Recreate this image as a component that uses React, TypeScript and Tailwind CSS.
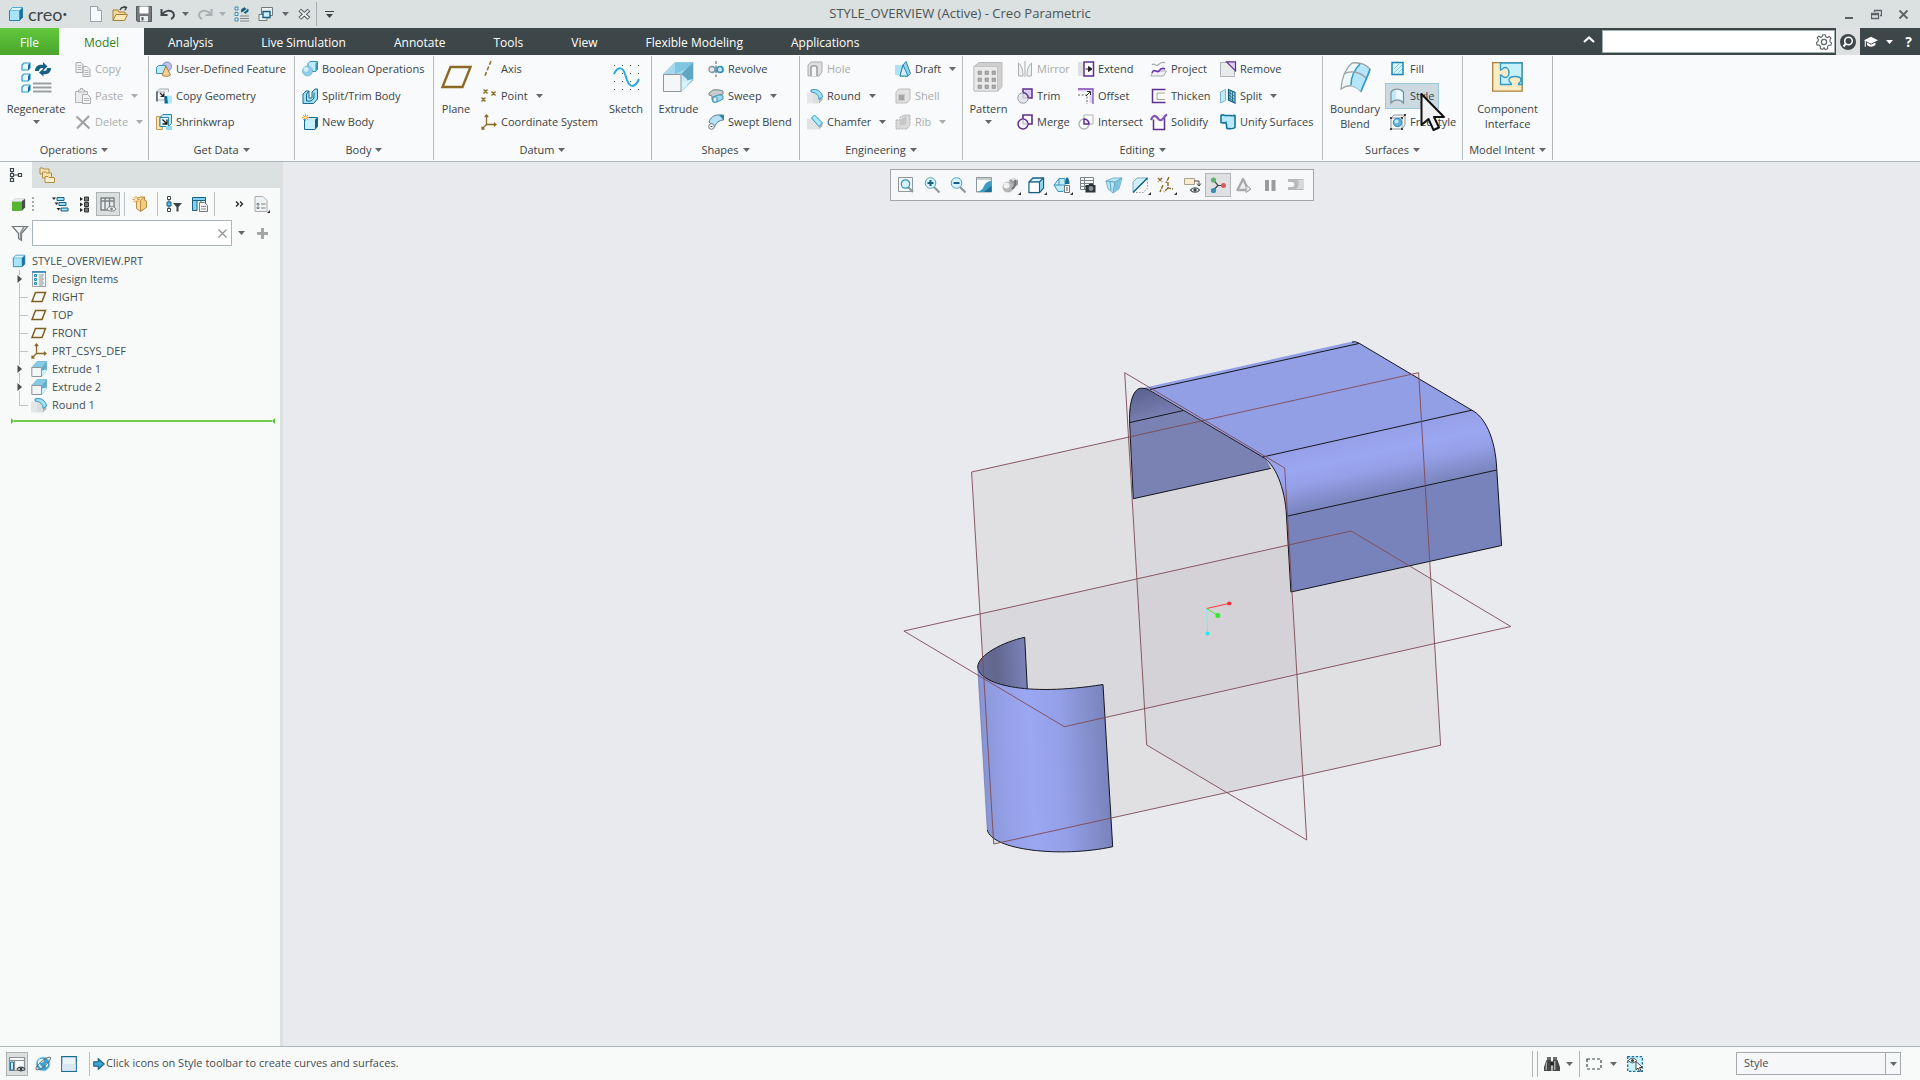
import React from 'react';

// 16x16 icons, shared by the ribbon, the tree and the toolbars
const icons: Record<string, React.ReactNode> = {
  cube: (
    <>
      <path d="M1.5 4.5l3-3h10v10l-3 3h-10z" fill="#a8e4fb" stroke="#2483ab" />
      <path d="M11.5 4.5l3-3v10l-3 3z" fill="#1d6f95" stroke="#2483ab" strokeWidth=".6" />
      <path d="M1.5 4.5l3-3h10l-3 3z" fill="#d8f4ff" stroke="#3f9dc2" strokeWidth=".6" />
    </>
  ),
  greenCube: (
    <>
      <path d="M0 5h11v11H0z" fill="#56b531" />
      <path d="M0 5l4-3h11l-4 3z" fill="#f2f2f2" stroke="#b5b5b5" strokeWidth=".6" />
      <path d="M11 5l4-3v10l-4 4z" fill="#4c4c4c" />
    </>
  ),
  newFile: (
    <>
      <path d="M2.5 .5h7l4 4v11h-11z" fill="#f7fafc" stroke="#93a2ab" />
      <path d="M9.5 .5v4h4" fill="#cfd9de" stroke="#93a2ab" />
    </>
  ),
  open: (
    <>
      <path d="M1 14.5V4h5l1 2h6v3" fill="#f3d793" stroke="#a6813c" />
      <path d="M1 14.5l3-6h11.5l-3 6z" fill="#ffe9b5" stroke="#a6813c" />
      <path d="M8 4c1-2.500 3-3 5-2.500M11.5 .3l3 1-1.500 3" fill="none" stroke="#3b4548" strokeWidth="1.400" />
    </>
  ),
  save: (
    <>
      <path d="M.5 .5h15v15h-14l-1-1z" fill="#737b7f" stroke="#555d61" />
      <path d="M3.5 .5h9v7h-9z" fill="#fff" />
      <path d="M4 10h8v5.500H4z" fill="#eceff0" />
      <path d="M5.5 11h2v3.500h-2z" fill="#555d61" />
    </>
  ),
  undo: <path d="M1.5 3v6h6M2 8.500c3-4 8-5 11-2 1.500 2 1.500 5-2 6.500" fill="none" stroke="#3d4649" strokeWidth="2" />,
  redo: <path d="M14.5 3v6h-6M14 8.500c-3-4-8-5-11-2-1.500 2-1.500 5 2 6.500" fill="none" stroke="#a9b0b1" strokeWidth="2" />,
  regen: (
    <>
      <path d="M1 1h3v3H1zM1 6.500h3v3H1zM1 12h3v3H1z" fill="#d9f3fd" stroke="#2b86ac" strokeWidth=".9" />
      <path d="M6 10h9M6 12.500h9M6 15h9" stroke="#7e8587" />
      <path d="M7.5 6.500C6 4 8 2 10 2l-.5-1.500L12.500 3 10 5M14 2.500c1.500 2.500 0 4-2 4.500l.5 1.300L9.500 6.500 12 4.700" fill="#17607f" />
    </>
  ),
  windows: (
    <>
      <path d="M3.5 1.500h11v8h-11z" fill="#eef1f2" stroke="#6f7a7e" />
      <path d="M1 8.500h8v6H1z" fill="#eef1f2" stroke="#6f7a7e" />
      <path d="M5 5.500h7v6H5z" fill="#c9f0ff" stroke="#17607f" strokeWidth="1.400" />
    </>
  ),
  closeWin: (
    <>
      <path d="M2 3.500L12.500 13M12.500 3.500L2 13" stroke="#454d50" strokeWidth="4.400" />
      <path d="M2.500 4l9.500 8.500M12 4l-9.500 8.500" stroke="#e8ecec" strokeWidth="2.200" />
    </>
  ),
  copy: (
    <>
      <path d="M1 1.500h5l2 2v8H1zM8 5.500h4l3 3v7H8z" fill="#f0f1f2" stroke="#a9adaf" />
      <path d="M2.500 4.500h4M2.500 6.500h4M2.500 8.500h4M9.500 9.500h4M9.500 11.500h4M9.500 13.500h4" stroke="#b5b8ba" />
    </>
  ),
  paste: (
    <>
      <path d="M.5 3.500h12v11H.5z" fill="#ececed" stroke="#b0b3b5" />
      <path d="M3.500 4V2h2V.5h2V2h2v2z" fill="#f7f7f7" stroke="#a9adaf" />
      <path d="M7.500 6.500h5l3 3v6h-8z" fill="#f5f5f6" stroke="#a9adaf" />
      <path d="M9 10.500h5M9 12.500h5" stroke="#b5b8ba" />
    </>
  ),
  del: <path d="M1.500 2.500l13 12M14 2L2 14.500" stroke="#a3a3a3" strokeWidth="2.200" />,
  udf: (
    <>
      <circle cx="11" cy="5.500" r="4.500" fill="#bcc3ea" stroke="#7f89c2" />
      <path d="M.5 6.500l2-2h7v6l-2 2h-7z" fill="#bdeafc" stroke="#3a93ba" />
      <path d="M10 5l4.500 9c-2 1.800-6.500 1.800-8.500 0z" fill="#f0cf95" stroke="#a57c3c" />
    </>
  ),
  copyGeom: (
    <>
      <path d="M.5 4l3-3h9v3" fill="#eceeef" stroke="#a9adaf" />
      <path d="M.5 4h8v8h-8z" fill="#fafafa" stroke="#a9adaf" />
      <path d="M1 3.500v10" stroke="#4a6274" strokeWidth="1.600" />
      <path d="M4 5l3 3M7.500 5.500V8.500H4.500" stroke="#222" fill="none" strokeWidth="1.200" />
      <path d="M8.500 8h4v7.500h-4z" fill="#0e6d92" />
      <path d="M11 7.500h5v8h-4z" fill="#a8eaff" />
    </>
  ),
  shrink: (
    <>
      <path d="M.5 2.500h6v13h-6z" fill="#fbe6bd" stroke="#c79c50" />
      <path d="M4 3.500l3-3h8.500v9l-3 3H4z" fill="#bfeafa" stroke="#2c86ab" />
      <path d="M4 3.500h8.500v9H4z" fill="#e9f8fd" stroke="#2c86ab" />
      <path d="M6.500 5.500l4 4M11 5.500V10H6.500" fill="none" stroke="#1c1c1c" strokeWidth="1.300" />
      <path d="M10 12h6v4h-6z" fill="#8fdcf8" />
    </>
  ),
  boolean: (
    <>
      <path d="M6 2.500l2-2h7.500v8l-2 2H6z" fill="#bfeafb" stroke="#338cb0" />
      <path d="M13.500 2.500l2-2v8l-2 2z" fill="#3b93b8" />
      <circle cx="5.500" cy="10" r="5" fill="#8fcde8" stroke="#5fa5c6" strokeWidth=".6" />
      <circle cx="4" cy="8.500" r="2.400" fill="#d2effa" />
    </>
  ),
  splitBody: (
    <>
      <path d="M1 6l3-3h3v7h3V4l3-3h2.500v10l-4 4.500H1z" fill="#a6def4" stroke="#176c92" />
      <path d="M7 3L4.500 6v7H9l3-3V4.500" fill="none" stroke="#176c92" />
    </>
  ),
  newBody: (
    <>
      <path d="M2.500 5.500l2-2h11v9l-2.500 3H2.500z" fill="#c8eefc" stroke="#176c92" />
      <path d="M13 5.500l2.500-2v9l-2.500 3z" fill="#17607f" />
      <path d="M3.500 0v7M0 3.500h7M1 1l5 5M6 1L1 6" stroke="#f0962a" />
      <circle cx="3.500" cy="3.500" r="1.300" fill="#fff4c0" />
    </>
  ),
  axis: <path d="M10 0L3.500 16" stroke="#8b6a24" strokeWidth="1.500" strokeDasharray="4 2" />,
  point: (
    <path d="M2.500 1.500l4 4M6.500 1.500l-4 4M10.500 3.500l4 4M14.500 3.500l-4 4M.5 9.500l4 4M4.500 9.500l-4 4" stroke="#8b6a24" strokeWidth="1.400" />
  ),
  csys: <path d="M5.500 1v9.500h9.500M5.500 10.500L1 15M3.800 3l1.700-2 1.700 2M13 8.700l2 1.800-2 1.800M1 12.500V15h2.500" fill="none" stroke="#8b6a24" strokeWidth="1.300" />,
  plane: <path d="M4.500 3.500h10l-3.500 9H1z" fill="none" stroke="#7d601f" strokeWidth="1.500" />,
  revolve: (
    <>
      <circle cx="4" cy="8.500" r="3" fill="#e4e6e8" stroke="#8d9295" strokeWidth="1.300" />
      <circle cx="12" cy="8.500" r="3" fill="#bfe9fb" stroke="#2585b5" strokeWidth="1.600" />
      <path d="M4 5.500c2 0 6 6 8 6M4 11.500c2 0 6-6 8-6" fill="none" stroke="#58a9cf" />
      <path d="M8 0v16" stroke="#555" strokeDasharray="3 1.500" />
    </>
  ),
  sweep: (
    <>
      <path d="M1 5l4-3c4-.5 8 0 10 1v3c-3 1-5 1-6 3v4l-5-1V8L1 7z" fill="#c9ccce" stroke="#7c8386" />
      <path d="M5 9l5-2c2 0 4 0 5 1v3l-6 3H5z" fill="#9edaf3" stroke="#3a93ba" />
      <path d="M5 9h4v5H5z" fill="#e2f6fd" stroke="#3a93ba" />
    </>
  ),
  sweptBlend: (
    <>
      <path d="M1 8C2 4 6 1 10 1h5.500v5C11 6 8 9 6.500 13z" fill="#b5e2f4" stroke="#56788a" />
      <path d="M11 1l4.500 5v-5z" fill="#2c86ab" />
      <circle cx="3.500" cy="12.500" r="2.800" fill="#fff" stroke="#6e7679" />
      <path d="M2.500 12.500h2" stroke="#444" />
    </>
  ),
  hole: (
    <>
      <path d="M1 4l3-3h11v10l-3 4H1z" fill="#dedede" stroke="#adadad" />
      <path d="M4 15V7c0-3 6-3 6 0v8" fill="#f6f6f6" stroke="#a0a0a0" strokeWidth="1.600" />
    </>
  ),
  round: (
    <>
      <path d="M0 4.500h6v11H0z" fill="#e4e6e7" />
      <path d="M6 4.500c4 1 6 4 6 7v4H6z" fill="#dcdfe0" />
      <path d="M12 11.500l3.500-2.500v3L12 15.500z" fill="#b3b8ba" />
      <path d="M4 2C10 0 15 4 15.500 9L12 11.500C12 7 9 4.500 4 4z" fill="#a3e0f8" stroke="#2f97c4" />
    </>
  ),
  chamfer: (
    <>
      <path d="M0 4.500h5l7 7v4H0z" fill="#e0e3e4" />
      <path d="M12 11.500l3.500-3.500v4L12 15.500z" fill="#b3b8ba" />
      <path d="M4.500 4l3-3 8 8-3.500 3.500z" fill="#a9e9fb" stroke="#2f97c4" />
    </>
  ),
  draft: (
    <>
      <path d="M0 4h8v10H0z" fill="#abe2f5" />
      <path d="M8 4l3-3.500 4.500 12L13 15H5z" fill="#8ed3ee" stroke="#2f86aa" />
      <path d="M8 4l5 11H5z" fill="#d4f1fb" stroke="#2f86aa" />
    </>
  ),
  shell: (
    <>
      <path d="M1 4l3-3h11v10l-3 4H1z" fill="#e2e2e2" stroke="#bdbdbd" />
      <path d="M3.500 6.500h6v6h-6z" fill="#a6a6a6" stroke="#c9c9c9" />
    </>
  ),
  rib: (
    <>
      <path d="M1 6h4V3l4-2h6v10l-3 4H1z" fill="#dadada" stroke="#b0b0b0" strokeDasharray="2 1" />
      <path d="M5 12V6l6-4v8z" fill="#c6c6c6" />
    </>
  ),
  mirror: <path d="M1.500 2v13h4.500C6 8 4 4 1.500 2zM14.500 2v13H10C10 8 12 4 14.500 2zM8 0v16" fill="#eef0f1" stroke="#a9adaf" />,
  trim: (
    <>
      <path d="M6 1h9v9H6z" fill="#d9ccf5" stroke="#5b2f8f" strokeWidth="1.500" />
      <circle cx="6" cy="10" r="5.200" fill="#e2e3e6" fillOpacity=".85" stroke="#9b9fa3" />
      <path d="M6 4.800A5.200 5.200 0 0 1 11.200 10" fill="none" stroke="#5b2f8f" strokeWidth="1.500" />
    </>
  ),
  merge: (
    <>
      <path d="M6 5V1h9v9h-4" fill="none" stroke="#5b2f8f" strokeWidth="1.600" />
      <circle cx="6" cy="10" r="5" fill="#f3f3f6" stroke="#5b2f8f" strokeWidth="1.500" />
      <path d="M6 5v5h5" fill="none" stroke="#b2b5b8" />
    </>
  ),
  intersect: (
    <>
      <path d="M6 1h9v9H6z" fill="none" stroke="#b2b5b8" />
      <circle cx="6" cy="10" r="5" fill="none" stroke="#b2b5b8" strokeWidth="1.400" />
      <path d="M6 10V5a5 5 0 0 1 5 5z" fill="#eeeaf5" stroke="#5b2f8f" strokeWidth="1.400" />
    </>
  ),
  extend: (
    <>
      <path d="M0 1h6v14H0z" fill="#e0e1e3" />
      <path d="M6 1h9.500v14H6z" fill="#fff" stroke="#5b2f8f" strokeWidth="1.500" />
      <path d="M7.500 8h3V5.500L14 8l-3.500 2.500V8" fill="#222" stroke="#222" />
    </>
  ),
  offset: (
    <>
      <path d="M0 0h15v15h-3.500V3.500H0z" fill="#ded3f0" />
      <path d="M0 1h15v15" fill="none" stroke="#8253b5" strokeWidth="1.300" />
      <path d="M0 7h9v9" fill="none" stroke="#666" strokeDasharray="2 1.500" />
      <path d="M8 8l4-4M9 3.500h3.500V7" fill="none" stroke="#333" />
    </>
  ),
  project: (
    <>
      <path d="M1 4c2-3 4 2 6 0s4-4 7-2" fill="none" stroke="#a7abad" strokeWidth="1.300" />
      <path d="M2 10h13.500l-3 5H0z" fill="#f1f1f3" stroke="#a7abad" />
      <path d="M1 12c2-6 5 1 7-2s4-3 6-2" fill="none" stroke="#7233b0" strokeWidth="1.600" />
    </>
  ),
  thicken: (
    <>
      <path d="M14 1.500H2v13h12z" fill="#fdfdfe" />
      <path d="M14.500 1.500H1.500v13h13" fill="none" stroke="#5b2f8f" strokeWidth="1.500" />
      <path d="M14 5H6v6.500h8" fill="none" stroke="#9da1a4" />
    </>
  ),
  solidify: (
    <>
      <path d="M2.500 5.500v10h11v-13" fill="#fbfafd" stroke="#5b2f8f" strokeWidth="1.500" />
      <path d="M0 6C2 1 4 1 6.500 4s4 3 6 0 2.500-3 3.500-3.500" fill="none" stroke="#8352b8" strokeWidth="2.200" />
    </>
  ),
  remove: (
    <>
      <path d="M.5 1.500h14v14H.5z" fill="#e9eaec" stroke="#b1b4b6" />
      <path d="M6.500 .8h9v9z" fill="#dccdf5" stroke="#5b2f8f" strokeWidth="1.200" />
    </>
  ),
  split: (
    <>
      <path d="M.5 4l5-2.500v11L.5 15z" fill="#bdecfb" stroke="#7fb6cc" />
      <path d="M8.500 1.500l6.500 3V15l-6.500-3z" fill="#9fdcf2" stroke="#17607f" strokeWidth="1.200" />
      <path d="M9 4l5 4M9 7l5 4M9 10l5 3.500M10 3v9M12.500 4v9" stroke="#17607f" strokeWidth=".8" />
    </>
  ),
  unify: (
    <path d="M1 1.500c3-2 4 1 5 0h5c2 1 3-1 4 0v12c-2 2-6 1-8 1l-1-6c-2 1-4 0-5 0z" fill="#b6eafa" stroke="#17719a" strokeWidth="1.600" />
  ),
  fill: (
    <>
      <path d="M2 1.500h11v12H2z" fill="#d5f4fd" stroke="#1c84b4" strokeWidth="1.500" />
      <path d="M4 8l5-5M4 12l8-8M8 12l4-4" stroke="#87cde6" />
    </>
  ),
  style: (
    <>
      <path d="M1 4c3-4 9-4 12.500 0v11C10 11 4 11 1 15z" fill="#bfeafa" stroke="#7d8e98" strokeWidth="1.200" />
      <path d="M6 2c3 0 5 1 6.500 3v7c-2-1-4-1.500-6.500-1.500z" fill="#ecfaff" />
    </>
  ),
  freestyle: (
    <>
      <path d="M1 4l3-3h11v10l-3 4H1zM1 4h11v11M12 4l3-3" fill="none" stroke="#8f9598" />
      <circle cx="7.500" cy="8.500" r="4.200" fill="#5db4dc" stroke="#2d88b2" />
      <circle cx="6.500" cy="7.500" r="2" fill="#c6ebf9" />
      <path d="M0 3h2v2H0zM11 3h2v2h-2zM0 14h2v2H0zM11 14h2v2h-2zM14 0h2v2h-2z" fill="#444" />
    </>
  ),
  tree: (
    <path d="M2.500 1.500h3v3h-3zM2.500 6.500h3v3h-3zM2.500 11.500h3v3h-3zM10.500 6.500h3v3h-3zM4 4.500v2M4 9.500v2M5.500 8h5" fill="none" stroke="#3b4548" strokeWidth="1.200" />
  ),
  folders: (
    <>
      <path d="M1 1h3l1 1h5v5H1z" fill="#fae2af" stroke="#b48b46" />
      <path d="M3.500 5h3l1 1h5v5h-9z" fill="#fae2af" stroke="#b48b46" />
      <path d="M6 9.500h3l1 1h5.500v5H6z" fill="#fff0cd" stroke="#b48b46" />
    </>
  ),
  treeA: (
    <>
      <path d="M5 1.500h7v3H5zM7 6.500h7v3H7zM9 12h7v3H9z" fill="#9be0f8" stroke="#17607f" />
      <path d="M0 1.500h4L2 4zM2.500 6.500h4l-2 2.500zM4.500 12h4l-2 2.500z" fill="#222" />
    </>
  ),
  treeB: (
    <>
      <path d="M6.500 1h4v4h-4zM6.500 6.500h4v4h-4zM6.500 12h4v4h-4z" fill="#777" stroke="#333" />
      <path d="M2 1v4l3-2zM2 6.500v4l3-2zM2 12v4l3-2z" fill="#222" />
    </>
  ),
  columns: (
    <>
      <path d="M1 2h13v12H1zM1 5h13M5 2v12M9.500 2v12" fill="#e9ebec" stroke="#7d8487" strokeWidth="1.400" />
      <path d="M7 13c2-3.500 7-3.500 9 0-2 3-7 3-9 0z" fill="#f1f1f1" stroke="#7d8487" />
      <circle cx="11.500" cy="13" r="1.400" fill="#7d8487" />
    </>
  ),
  newPart: (
    <>
      <path d="M3.500 2.500L7.500 1h4v11l-4 3.500-4-3z" fill="#f9dca0" stroke="#b98e42" />
      <path d="M7.500 4.500L11.500 1v3l2 1v6.500l-6 4z" fill="#f1cb84" stroke="#b98e42" />
      <path d="M3 0v7M-.5 3.500h7M.5 1l5 5M5.500 1l-5 5" stroke="#ef8f22" />
      <circle cx="3" cy="3.500" r="1.200" fill="#fff" />
    </>
  ),
  treeFilter: (
    <>
      <path d="M1.500 .5h3v3h-3zM1.500 12.500h3v3h-3zM3 3.500v9" fill="none" stroke="#3b4548" />
      <path d="M1 6h4v4H1z" fill="#58bfe6" stroke="#17607f" />
      <path d="M7 7h9l-3.500 4v4.500h-2V11z" fill="#3b4548" />
    </>
  ),
  tableFile: (
    <>
      <path d="M.5 1.500h13v3H.5zM.5 4.500h4.500v10H.5z" fill="#7fd3f2" stroke="#17607f" />
      <path d="M9 4.500v3M13.500 4.500v3" stroke="#17607f" />
      <path d="M7.500 6.500h5l3 3v6h-8z" fill="#f7f7f7" stroke="#737b7f" />
      <path d="M9 10.500h5M9 13h5" stroke="#888" />
    </>
  ),
  listFile: (
    <>
      <path d="M1 .5h8l4 4v11H1z" fill="#eef3f5" stroke="#a5adb1" />
      <path d="M3 7.500h2v1.500H3zM3 11h2v1.500H3zM7 8h4.500M7 12h4.500" fill="none" stroke="#7d8487" />
      <path d="M16 14v3h-3z" fill="#333" />
    </>
  ),
  funnel: (
    <>
      <path d="M.5 1.500h15l-6 7v7l-3-2v-5z" fill="#f2f3f3" stroke="#6f777a" strokeWidth="1.200" />
      <path d="M12 2L8.500 8v6" fill="none" stroke="#8b9295" strokeWidth="1.500" />
    </>
  ),
  designItems: (
    <>
      <path d="M1.500 .5h13v15h-13z" fill="#f3f7f9" stroke="#9aa4a9" />
      <path d="M1 1h14" stroke="#2b86ac" strokeWidth="1.600" />
      <path d="M3.500 3.500h2v2h-2zM3.500 7.500h2v2h-2zM3.500 11.500h2v2h-2z" fill="#bfe9fb" stroke="#1c84b4" />
      <path d="M8 4h5M8 6h4M8 8h5M8 10h4M8 12h5M8 14h4" stroke="#8b9295" />
    </>
  ),
  extrude: (
    <>
      <path d="M1 6.500l5-6h9.500v9l-5 6z" fill="#b8e6f8" stroke="#5fa9c9" strokeWidth=".8" />
      <path d="M6 .5h9.500l-5 6H1z" fill="#86cbe6" />
      <path d="M10.500 6.500l5-6v9l-5 6z" fill="#65aecb" />
      <path d="M11 15V9.500l4.500-1V10z" fill="#d6f2fc" />
      <path d="M.8 6.500h9.700v9H.8z" fill="#f4f5f6" stroke="#8f979a" />
    </>
  ),
  zoomFit: (
    <>
      <path d="M.5 .5h14v14H.5z" fill="#f2f6f8" stroke="#8f989c" />
      <path d="M10 10l5 5" stroke="#8f989c" strokeWidth="2.200" />
      <circle cx="7.500" cy="7" r="4.200" fill="#d6f4fd" stroke="#3a93ba" strokeWidth="1.200" />
    </>
  ),
  zoomIn: (
    <>
      <path d="M10 10l5.500 5.500" stroke="#8f989c" strokeWidth="2.200" />
      <circle cx="6.500" cy="6" r="5.300" fill="#d6f4fd" stroke="#5a9fbc" />
      <path d="M6.500 3v6M3.500 6h6" stroke="#17607f" strokeWidth="2" />
    </>
  ),
  zoomOut: (
    <>
      <path d="M10 10l5.500 5.500" stroke="#8f989c" strokeWidth="2.200" />
      <circle cx="6.500" cy="6" r="5.300" fill="#d6f4fd" stroke="#5a9fbc" />
      <path d="M3.500 6h6" stroke="#17607f" strokeWidth="2" />
    </>
  ),
  repaint: (
    <>
      <path d="M.5 .5h15v14.500H.5z" fill="#f6fafb" stroke="#8f989c" />
      <path d="M15.500 4v11H1c4-1 6-3 7-6 1-3 4-5 7.500-5z" fill="#3d9ac0" />
      <path d="M15.500 9v6H8z" fill="#1c6d92" />
      <path d="M1 2h14" stroke="#b4bbbe" strokeWidth="1.500" />
    </>
  ),
  shading: (
    <>
      <path d="M7 3l6-2 3 2v5l-6 3z" fill="#9a9d9f" />
      <path d="M9 2l5-1 2 2-5 1z" fill="#dfe0e1" />
      <circle cx="6" cy="10" r="5.500" fill="#b4b6b8" />
      <circle cx="4.500" cy="8.500" r="3" fill="#f2f2f3" />
      <path d="M10 12c3-2 4-6 3-9" stroke="#6d7173" strokeWidth="2" fill="none" />
    </>
  ),
  box: (
    <>
      <path d="M1 5l4-4h10.500v10l-4 4.500H1z" fill="#d3f2fc" stroke="#17607f" strokeWidth="1.300" />
      <path d="M1 5h10.500v10.500M11.500 5l4-4" fill="none" stroke="#17607f" strokeWidth="1.300" />
      <path d="M1.800 5.800h9v9h-9z" fill="#fff" />
      <path d="M12 5.500l3-3v8l-3 3.500z" fill="#8fd4ee" />
    </>
  ),
  orient: (
    <>
      <path d="M0 8l5-6.500h6v11l-2 2H4z" fill="#bfeafa" stroke="#3a93ba" />
      <path d="M0 8h10M5 1.500V8" stroke="#3a93ba" />
      <path d="M11 7c0-4 1-6 2-7 1.500 1 2.500 3 2.500 7z" fill="#1c6d92" />
      <path d="M10.500 8.500h5v7h-5z" fill="#fff" stroke="#6f777a" />
      <path d="M12 11h2M12 13h2" stroke="#555" />
    </>
  ),
  camera: (
    <>
      <path d="M.5 .5h13v12H.5zM.5 3.500h13M.5 6.500h13M.5 9.500h13M4.500 .5v12" fill="#f5f6f6" stroke="#7d8487" />
      <path d="M5.500 8h3l1-1.500h3l1 1.500h2v7.500h-10z" fill="#2e3436" />
      <circle cx="11" cy="11.500" r="2.400" fill="#8b9295" />
    </>
  ),
  perspective: (
    <>
      <path d="M0 4l7-3h9l-3 11-6 4-5-4z" fill="#bce6f6" stroke="#77b6d0" />
      <path d="M0 4l9 1 7-4M9 5l-2 11M4 4.500l1 9" fill="none" stroke="#56a0c0" />
      <path d="M9 6l6-4-2.500 9.500L8 15z" fill="#7cc0db" />
    </>
  ),
  section: (
    <>
      <path d="M1 5l4-4h10.500L1 15z" fill="#cdeffb" stroke="#7fb1c5" />
      <path d="M1 15.500L15.500 1" stroke="#17607f" strokeWidth="1.400" />
      <path d="M15.500 2v9l-4 4.500H2" fill="none" stroke="#8f989c" strokeDasharray="1.500 1.500" />
    </>
  ),
  datumShow: (
    <path d="M0 1l4 4M4 1L0 5M11 0L8 6M5 8l-3 7M10 5v6l5 1M10 11l-4 4" fill="none" stroke="#8b6a24" strokeWidth="1.400" strokeDasharray="4 1" />
  ),
  annotShow: (
    <>
      <path d="M.5 1.500h10v6H.5z" fill="#fdeccb" stroke="#a6a08f" />
      <path d="M10.500 4H15v4M13 6.500l2 2.500 2-2.500" fill="none" stroke="#444" />
      <path d="M6.500 13c2-3 7-3 9 0-2 3-7 3-9 0z" fill="#fff" stroke="#3b4548" strokeWidth="1.200" />
      <circle cx="11" cy="13" r="1.700" fill="#3b4548" />
    </>
  ),
  spin: (
    <>
      <path d="M3.500 3L8 8.500h5M8 8.500L3.500 13" fill="none" stroke="#444" strokeWidth="1.200" />
      <circle cx="3.500" cy="3" r="2.600" fill="#5cb56a" />
      <circle cx="13.500" cy="8.500" r="2.500" fill="#d95b5b" />
      <circle cx="3.500" cy="13.500" r="2.600" fill="#3a8db5" />
    </>
  ),
  simTri: (
    <>
      <path d="M7 2L1.500 13h11z" fill="#f0f0f0" stroke="#a9a9a9" strokeWidth="2.400" strokeLinejoin="round" />
      <path d="M10 8l5 4-5 3.500z" fill="#e5e5e5" stroke="#9c9c9c" />
    </>
  ),
  pause: <path d="M3 3h4v11H3zM9.500 3h4v11h-4z" fill="#9b9b9b" />,
  simEnd: (
    <>
      <path d="M0 2h15.500v11H0v-3h4c3 0 3-5 0-5H0z" fill="#b9b9b9" />
      <path d="M10 3h5v9h-7c3-2 3-6 2-9z" fill="#d9d9d9" />
    </>
  ),
  panelEye: (
    <>
      <path d="M.5 1.500h15v13H.5zM.5 4.500h15M5.500 4.500v10" fill="#f7f8f8" stroke="#8b9295" strokeWidth="1.200" />
      <path d="M1.500 6h3v8h-3z" fill="#c9effb" stroke="#17719a" />
      <path d="M8 13c2-2.500 6-2.500 8 0-2 2.500-6 2.500-8 0z" fill="#fff" stroke="#3b4548" strokeWidth="1.200" />
      <circle cx="12" cy="13" r="1.500" fill="#3b4548" />
    </>
  ),
  globe: (
    <>
      <circle cx="8" cy="8" r="6.800" fill="#3f9fce" stroke="#8cc6e0" />
      <path d="M4 3.500c2-1.500 6-1 5 1.500s-4 1-4 3 3 2 2 4.500c-3-1-6-6-3-9zM11.500 7c2 0 2 3 .5 4s-2-3-.5-4z" fill="#e0f4fb" />
      <path d="M1 13.500c-2-3 12-14.500 14.500-12 1.500 3-11 14.500-14.500 12z" fill="none" stroke="#555e62" strokeWidth=".9" />
    </>
  ),
  blank: (
    <>
      <path d="M.7 .7h14.600v14.600H.7z" fill="#eaf3f8" stroke="#1c6d92" strokeWidth="1.200" />
      <path d="M1.300 8h13.400v6.700H1.300z" fill="#d9e8f0" />
    </>
  ),
  arrowRight: <path d="M1 5h6V1l8 7-8 7v-4H1z" fill="#3aa5d0" stroke="#175d7d" strokeWidth="1.400" />,
  binoculars: (
    <>
      <path d="M3 1h4v3H3zM9 1h4v3H9z" fill="#6c6c6c" />
      <path d="M2.500 4H7l.5 11H0V11zM9 4h4.500l2.500 7v4H8.500z" fill="#474747" />
      <path d="M2 7l1-2v9H1.500v-3zM10 5h1.500v9H10z" fill="#a5a5a5" />
      <path d="M6.500 5.500h3v4h-3z" fill="#222" />
    </>
  ),
  marquee: <path d="M1 3h14v10H1z" fill="none" stroke="#3b4548" strokeDasharray="3 2" strokeWidth="1.200" />,
  selectEye: (
    <>
      <path d="M.7 .7h14.600v14.600H.7z" fill="#c9f3fd" stroke="#17719a" strokeWidth="1.300" strokeDasharray="2.500 1.500" />
      <path d="M1.500 4.500c2-3 6-3 8 0-2 3-6 3-8 0z" fill="#fff" stroke="#3b4548" />
      <circle cx="5.500" cy="4.500" r="1.500" fill="#3b4548" />
      <path d="M9 5.500v8.500l2-2 1.500 3.500 1.500-.7-1.500-3.300h3z" fill="#fff" stroke="#444" />
    </>
  ),
  gear: (
    <>
      <path d="M6.800 .8h2.400l.5 2 1.800.8 2-1.100 1.500 1.700-1.200 1.800.4 2 1.300.9-.6 2.200-2.100.1-1.300 1.500.2 2-2.400.9L8 13.700l-1.300 1.700-2.400-.8.200-2.100-1.400-1.400-2.100-.2-.5-2.300L2 7.500l.4-1.800L1.200 3.900l1.500-1.700 2 1.100 1.600-.7z" fill="#fff" stroke="#5a6366" strokeWidth="1.100" />
      <circle cx="8" cy="8" r="2.600" fill="none" stroke="#5a6366" strokeWidth="1.200" />
    </>
  ),
  lens: (
    <>
      <circle cx="8" cy="8" r="8" fill="#3d4749" />
      <circle cx="8.500" cy="7" r="3.800" fill="none" stroke="#fff" strokeWidth="1.600" />
      <path d="M6 9.500L3.500 12.500" stroke="#fff" strokeWidth="2" />
    </>
  ),
  cap: (
    <>
      <path d="M8 2l8 4-8 4-8-4z" fill="#fff" />
      <path d="M3.500 8.500L8 11l5-2.500v3c-3 2.500-7 2.500-9.500 0z" fill="#fff" />
      <path d="M1.500 6.500v7" stroke="#fff" strokeWidth="1.200" />
    </>
  ),
};

// 31x31 icons above the big ribbon buttons
const bigIcons: Record<string, React.ReactNode> = {
  regen: (
    <>
      <path d="M1 3l2-2h6v5l-2 2H1zM1 14l2-2h6v5l-2 2H1zM1 25l2-2h6v5l-2 2H1z" fill="#e6f8fe" stroke="#2b9ccb" strokeWidth="1.200" />
      <path d="M7 3l2-2v5L7 8zM7 14l2-2v5l-2 2zM7 25l2-2v5l-2 2z" fill="#1c6d92" />
      <path d="M12 21.500h18.500M12 25.500h18.500M12 29.500h18.500" stroke="#9a9fa1" strokeWidth="1.800" />
      <path d="M18 9H14c0-4 3-7 8-6V0l4.500 4.500L22 8.500V6c-2.500-.5-4 1-4 3z" fill="#17607f" />
      <path d="M26 6h4c0 4-3 7-7.500 6v2.500L18 10.500l4.500-4V9c2 .5 3.500-1 3.500-3z" fill="#17607f" />
    </>
  ),
  plane: <path d="M9.500 5h20L21.500 25H1.500z" fill="none" stroke="#8b6a24" strokeWidth="2.400" />,
  sketch: (
    <>
      {[2, 10, 18, 26].flatMap((y) => [2, 10, 18, 26].map((x) => <path key={`${x}-${y}`} d={`M${x + 1} ${y + 1}h1v1h-1z`} fill="#555" />))}
      <path d="M3 12c4-8 9-7 11 0l2 6c3 8 8 8 12-1" fill="none" stroke="#2aa6e0" strokeWidth="2" />
    </>
  ),
  extrude: (
    <>
      <path d="M.5 12L12 .5h18v17.500L18 29.500z" fill="#c8edf9" stroke="#8dbed2" strokeWidth=".8" />
      <path d="M12 .5h18L18 12H.5z" fill="#a5d8ec" />
      <path d="M12 .5h18L24 6.500 12 12z" fill="#7fc6e2" />
      <path d="M18 12L30 .5V18l-6 5V17z" fill="#5fa6c4" />
      <path d="M18 29V20l12-3z" fill="#d6f4fd" />
      <path d="M.5 12.500H18v17H.5z" fill="#f5f6f7" stroke="#8f9699" />
    </>
  ),
  pattern: (
    <>
      <path d="M1 4.500L6 .5h23v24L25 29H1z" fill="#cfcfcf" stroke="#bbb" />
      <path d="M1 4.500h23.500V29H1z" fill="#e9e9e9" stroke="#c4c4c4" />
      {[9, 16, 23].flatMap((y) => [5, 12, 19].map((x) => <path key={`${x}-${y}`} d={`M${x} ${y}h3.500v3.500h-3.500z`} fill="#a9a9a9" stroke="#8c8c8c" strokeWidth=".6" />))}
    </>
  ),
  boundary: (
    <>
      <path d="M1 27C2 14 6 6 12 1c7-1 13 1 18 6-2 7-6 14-9 22.500C15 23 8 22 1 27z" fill="#eef7fa" stroke="#9ca4a8" strokeWidth="1.300" />
      <path d="M20 3c5 1 8 3 10 5-3 7-6 13-9 21.500-3-3-6-5-9.500-6C12 15 14 8 20 3z" fill="#b2e6f8" />
      <path d="M20 2C14 8 11 14 11 23" fill="none" stroke="#2b97c8" strokeWidth="1.500" />
      <path d="M4 12c7-4 16-2 22 4" fill="none" stroke="#9ca4a8" strokeWidth="1.400" />
      <path d="M30 7c-2 7-6 14-9 22.500" stroke="#2b97c8" strokeWidth="1.600" fill="none" />
    </>
  ),
  component: (
    <>
      <path d="M.7 .7h29.500v28.500H.7z" fill="#fdebc4" stroke="#a6813c" strokeWidth="1.300" />
      <path d="M8.500 1H30v21.500h-3.500c0-2 2.500-2 2.500-4.500s-3-3.500-6-3.500-6 1-6 3.500 2.500 2.500 2.500 4.500h-11V13c2 0 2 2.500 4.500 2.500s4-2.500 4-5-1.500-5-4-5S10.500 8 8.500 8z" fill="#c6f1fc" stroke="#2b9ccb" strokeWidth="1.400" />
    </>
  ),
};

const Icon = ({ name, className = 'size-4' }: { name: string; className?: string }) => (
  <svg viewBox="0 0 16 16" className={`${className} shrink-0 overflow-visible`} fill="none" aria-hidden="true">
    {icons[name]}
  </svg>
);

const Caret = ({ className = 'text-[#636869]' }: { className?: string }) => (
  <svg viewBox="0 0 7 4" className={`h-1 w-[7px] shrink-0 ${className}`} aria-hidden="true">
    <path d="M0 0h7L3.500 4z" fill="currentColor" />
  </svg>
);

type CmdProps = { icon: string; label: string; caret?: boolean; disabled?: boolean; active?: boolean; children?: React.ReactNode };

const Cmd = ({ icon, label, caret, disabled, active, children }: CmdProps) => (
  <button
    disabled={disabled}
    className={`relative flex h-[26px] items-center gap-1 border px-1 whitespace-nowrap first:mb-px ${
      active ? 'border-[#9cc7dc] bg-[#ccd9e1]' : 'border-transparent'
    } ${disabled ? 'text-[#a9acad]' : ''}`}
  >
    <Icon name={icon} />
    {label}
    {caret && (
      <span className="pl-1">
        <Caret className={disabled ? 'text-[#a9acad]' : 'text-[#636869]'} />
      </span>
    )}
    {children}
  </button>
);

const Big = ({ icon, label, caret, className }: { icon: string; label: string; caret?: boolean; className: string }) => (
  <button className={`flex shrink-0 flex-col items-center pt-1.5 leading-[15px] ${className}`}>
    <svg viewBox="0 0 31 31" className="size-[31px]" fill="none" aria-hidden="true">
      {bigIcons[icon]}
    </svg>
    <span className="mt-2">{label}</span>
    {caret && (
      <span className="mt-1">
        <Caret />
      </span>
    )}
  </button>
);

const Col = ({ className = '', children }: { className?: string; children: React.ReactNode }) => (
  <div className={`flex shrink-0 flex-col items-start ${className}`}>{children}</div>
);

const Group = ({ label, className, children }: { label: string; className: string; children: React.ReactNode }) => (
  <section className={`flex shrink-0 flex-col border-r border-[#b3b8ba] ${className}`}>
    <div className="flex h-[84px] px-0.5">{children}</div>
    <button className="flex h-5 items-center justify-center gap-1 whitespace-nowrap">
      {label} <Caret />
    </button>
  </section>
);

// mouse pointer resting over the Style command
const Pointer = () => (
  <svg viewBox="0 0 26 40" className="pointer-events-none absolute top-2 left-[34px] z-10 h-10 w-[26px]" aria-hidden="true">
    <path d="M1.500 2v31l7-6 5 11 5.500-2.500-5-10.500H24z" fill="#f1f1f3" stroke="#111" strokeWidth="2" strokeLinejoin="round" />
  </svg>
);

const Ribbon = () => (
  <div className="flex h-[107px] border-b border-[#a9b9ba] bg-[#f8fafb] py-px text-[11px]">
    <Group label="Operations" className="w-[149px]">
      <Big icon="regen" label="Regenerate" caret className="w-[68px]" />
      <Col>
        <Cmd icon="copy" label="Copy" disabled />
        <Cmd icon="paste" label="Paste" caret disabled />
        <Cmd icon="del" label="Delete" caret disabled />
      </Col>
    </Group>
    <Group label="Get Data" className="w-[146px]">
      <Col>
        <Cmd icon="udf" label="User-Defined Feature" />
        <Cmd icon="copyGeom" label="Copy Geometry" />
        <Cmd icon="shrink" label="Shrinkwrap" />
      </Col>
    </Group>
    <Group label="Body" className="w-[139px]">
      <Col>
        <Cmd icon="boolean" label="Boolean Operations" />
        <Cmd icon="splitBody" label="Split/Trim Body" />
        <Cmd icon="newBody" label="New Body" />
      </Col>
    </Group>
    <Group label="Datum" className="w-[218px]">
      <Big icon="plane" label="Plane" className="w-10" />
      <Col className="w-[129px]">
        <Cmd icon="axis" label="Axis" />
        <Cmd icon="point" label="Point" caret />
        <Cmd icon="csys" label="Coordinate System" />
      </Col>
      <Big icon="sketch" label="Sketch" className="w-[42px]" />
    </Group>
    <Group label="Shapes" className="w-[148px]">
      <Big icon="extrude" label="Extrude" className="w-[49px]" />
      <Col>
        <Cmd icon="revolve" label="Revolve" />
        <Cmd icon="sweep" label="Sweep" caret />
        <Cmd icon="sweptBlend" label="Swept Blend" />
      </Col>
    </Group>
    <Group label="Engineering" className="w-[163px]">
      <Col className="w-[88px]">
        <Cmd icon="hole" label="Hole" disabled />
        <Cmd icon="round" label="Round" caret />
        <Cmd icon="chamfer" label="Chamfer" caret />
      </Col>
      <Col>
        <Cmd icon="draft" label="Draft" caret />
        <Cmd icon="shell" label="Shell" disabled />
        <Cmd icon="rib" label="Rib" caret disabled />
      </Col>
    </Group>
    <Group label="Editing" className="w-[360px]">
      <Big icon="pattern" label="Pattern" caret className="w-[47px]" />
      <Col className="w-[61px]">
        <Cmd icon="mirror" label="Mirror" disabled />
        <Cmd icon="trim" label="Trim" />
        <Cmd icon="merge" label="Merge" />
      </Col>
      <Col className="w-[73px]">
        <Cmd icon="extend" label="Extend" />
        <Cmd icon="offset" label="Offset" />
        <Cmd icon="intersect" label="Intersect" />
      </Col>
      <Col className="w-[69px]">
        <Cmd icon="project" label="Project" />
        <Cmd icon="thicken" label="Thicken" />
        <Cmd icon="solidify" label="Solidify" />
      </Col>
      <Col>
        <Cmd icon="remove" label="Remove" />
        <Cmd icon="split" label="Split" caret />
        <Cmd icon="unify" label="Unify Surfaces" />
      </Col>
    </Group>
    <Group label="Surfaces" className="w-[140px]">
      <Big icon="boundary" label="Boundary Blend" className="w-[60px]" />
      <Col>
        <Cmd icon="fill" label="Fill" />
        <Cmd icon="style" label="Style" active>
          <Pointer />
        </Cmd>
        <Cmd icon="freestyle" label="Freestyle" />
      </Col>
    </Group>
    <Group label="Model Intent" className="w-[90px]">
      <Big icon="component" label="Component Interface" className="w-[85px] px-2" />
    </Group>
  </div>
);

const TitleBar = () => (
  <header className="grid h-7 grid-cols-[1fr_auto_1fr] items-center bg-[#dbe0e0]">
    <div className="flex h-full items-center pl-2">
      <Icon name="cube" />
      <span className="w-16 pl-1 font-['Lato',sans-serif] text-lg leading-5 text-[#3d4749]">
        creo<span className="align-top text-[8px]">•</span>
      </span>
      <button title="New" className="w-6"><Icon name="newFile" /></button>
      <button title="Open" className="w-6"><Icon name="open" /></button>
      <button title="Save" className="w-6"><Icon name="save" /></button>
      <button title="Undo" className="flex w-[37px] items-center gap-1.5"><Icon name="undo" /> <Caret /></button>
      <button title="Redo" className="flex w-[37px] items-center gap-1.5"><Icon name="redo" /> <Caret className="text-[#a9b0b1]" /></button>
      <button title="Regenerate" className="w-6"><Icon name="regen" /></button>
      <button title="Windows" className="flex w-10 items-center gap-2"><Icon name="windows" /> <Caret /></button>
      <button title="Close" className="w-[18px]"><Icon name="closeWin" className="size-3.5" /></button>
      <button title="Customize" className="flex h-6 flex-col items-center justify-center gap-0.5 border-l border-[#a9b0b1] pl-2">
        <span className="h-px w-[9px] bg-[#3d4749]" />
        <Caret className="text-[#3d4749]" />
      </button>
    </div>
    <h1 className="text-[13px] text-[#4a5356]">STYLE_OVERVIEW (Active) - Creo Parametric</h1>
    <div className="flex items-center justify-end gap-4 pr-[11px] text-[#5c6467]">
      <button title="Minimize"><svg viewBox="0 0 11 11" className="size-[11px]"><path d="M1 8h8v2H1z" fill="currentColor" /></svg></button>
      <button title="Restore"><svg viewBox="0 0 11 11" className="size-[11px]"><path d="M3.500 3V1.500h7v5H9M.5 4.500h7v5h-7zM.5 5.500h7" fill="none" stroke="currentColor" strokeWidth="1.300" /></svg></button>
      <button title="Close"><svg viewBox="0 0 11 11" className="size-[11px]"><path d="M1.500 1.500l8 8M9.500 1.500l-8 8" stroke="currentColor" strokeWidth="1.800" /></svg></button>
    </div>
  </header>
);

const tabs = ['Analysis', 'Live Simulation', 'Annotate', 'Tools', 'View', 'Flexible Modeling', 'Applications'];

const TabBar = () => (
  <nav className="flex h-[27px] items-stretch bg-[#3d4749] text-xs text-white">
    <button className="w-[59px] bg-linear-to-b from-[#62c83c] to-[#4aa52d] pt-0.5">File</button>
    <button className="w-[85px] bg-[#f8fafb] pt-0.5 text-[#2f7d1f]">Model</button>
    {tabs.map((t) => (
      <button key={t} className="px-6 pt-0.5 whitespace-nowrap">{t}</button>
    ))}
    <div className="ml-auto flex items-center">
      <button title="Minimize ribbon" className="w-[19px] pb-1">
        <svg viewBox="0 0 12 7" className="h-[7px] w-3"><path d="M1 6l5-4.500L11 6" fill="none" stroke="currentColor" strokeWidth="2.200" /></svg>
      </button>
      <div className="flex h-[23px] w-[233px] items-center border border-[#9fb0b3] bg-white pr-0.5">
        <input aria-label="Search commands" className="min-w-0 flex-1 px-1 text-[#3d4749] outline-none" />
        <button title="Search options"><Icon name="gear" /></button>
      </div>
      <button title="Search" className="ml-px flex h-full w-6 items-center justify-center bg-[#dfe0e2]"><Icon name="lens" className="size-4" /></button>
      <button title="Learning" className="ml-1 flex items-center gap-2"><Icon name="cap" className="size-3.5" /> <Caret className="text-white" /></button>
      <button title="Help" className="mr-2 ml-3 text-sm font-bold">?</button>
    </div>
  </nav>
);

const treeItems = [
  { icon: 'designItems', label: 'Design Items', expandable: true },
  { icon: 'plane', label: 'RIGHT' },
  { icon: 'plane', label: 'TOP' },
  { icon: 'plane', label: 'FRONT' },
  { icon: 'csys', label: 'PRT_CSYS_DEF' },
  { icon: 'extrude', label: 'Extrude 1', expandable: true },
  { icon: 'extrude', label: 'Extrude 2', expandable: true },
  { icon: 'round', label: 'Round 1' },
];

const Rule = () => <span className="h-6 w-px bg-[#b9bfc1]" />;

const Sidebar = () => (
  <aside className="flex w-[283px] shrink-0 flex-col border-r-3 border-[#dbe0e0] bg-[#f8faf9] text-[11px]">
    <div className="flex h-[26px] bg-[#dbe0e0]">
      <button title="Model Tree" className="flex w-8 items-center justify-center bg-[#f8faf9]"><Icon name="tree" /></button>
      <button title="Folder Browser" className="flex w-[30px] items-center justify-center"><Icon name="folders" /></button>
    </div>
    <div className="flex h-8 items-center pl-3">
      <Icon name="greenCube" className="size-3.5" />
      <span className="ml-1.5 h-3.5 border-l-2 border-dotted border-[#a5abad]" />
      <button title="Expand" className="ml-[18px] w-[26px]"><Icon name="treeA" /></button>
      <button title="Collapse" className="w-[18px]"><Icon name="treeB" /></button>
      <button title="Tree columns" className="flex size-6 items-center justify-center border border-[#aeb2b3] bg-[#dcdfe0]"><Icon name="columns" /></button>
      <span className="w-1" />
      <Rule />
      <button title="New part" className="w-8 pl-2"><Icon name="newPart" /></button>
      <Rule />
      <button title="Tree filter" className="w-[34px] pl-2"><Icon name="treeFilter" /></button>
      <button title="Column settings" className="w-[22px]"><Icon name="tableFile" /></button>
      <Rule />
      <button title="More" className="ml-5">
        <svg viewBox="0 0 9 6" className="h-1.5 w-[9px]"><path d="M1 .5L3.500 3 1 5.500M5 .5L7.500 3 5 5.500" fill="none" stroke="#222" strokeWidth="1.300" /></svg>
      </button>
      <button title="Show list" className="ml-2.5"><Icon name="listFile" /></button>
    </div>
    <div className="flex h-[26px] items-center pl-3">
      <Icon name="funnel" />
      <div className="ml-1 flex h-[26px] w-[200px] items-center border border-[#a9b7ba] bg-white pr-1">
        <input aria-label="Filter tree" className="min-w-0 flex-1 px-1 outline-none" />
        <button title="Clear"><svg viewBox="0 0 9 9" className="size-[9px]"><path d="M.5 .5l8 8M8.500 .5l-8 8" stroke="#8b9295" strokeWidth="1.200" /></svg></button>
      </div>
      <button title="Filter options" className="px-1.5"><Caret /></button>
      <button title="Add" className="ml-1.5"><svg viewBox="0 0 11 11" className="size-[11px]"><path d="M4 0h3v4h4v3H7v4H4V7H0V4h4z" fill="#a3a6a6" /></svg></button>
    </div>
    <div className="pt-1.5 text-[#454d50]">
      <button className="flex h-[18px] items-center gap-1.5 pl-3">
        <Icon name="cube" className="size-3.5" /> STYLE_OVERVIEW.PRT
      </button>
      <ul>
        {treeItems.map((item, i) => (
          <li key={item.label} className="flex h-[18px] items-center pl-[19px]">
            <span className="flex w-3 flex-col self-stretch">
              <span className={`flex-1 border-l border-[#bfc4c5] ${item.expandable ? '' : 'w-[9px] border-b'}`} />
              {item.expandable && (
                <svg viewBox="0 0 5 8" className="-ml-0.5 h-2 w-[5px]"><path d="M.5 0v8L5 4z" fill="#4c4c4c" /></svg>
              )}
              <span className={`flex-1 ${i < treeItems.length - 1 ? 'border-l border-[#bfc4c5]' : ''}`} />
            </span>
            <button className="flex items-center gap-[5px]">
              <Icon name={item.icon} /> {item.label}
            </button>
          </li>
        ))}
      </ul>
      <div className="mr-[5px] ml-[11px] flex h-3.5 items-center">
        <svg viewBox="0 0 3 6" className="h-1.5 w-[3px]"><path d="M0 0v6l3-3z" fill="#5bc236" /></svg>
        <span className="h-0.5 flex-1 bg-[#6fcb4c]" />
        <svg viewBox="0 0 3 6" className="h-1.5 w-[3px]"><path d="M3 0v6L0 3z" fill="#5bc236" /></svg>
      </div>
    </div>
  </aside>
);

const viewTools = [
  'zoomFit', 'zoomIn', 'zoomOut', 'repaint', 'shading', 'box', 'orient', 'camera',
  'perspective', 'section', 'datumShow', 'annotShow', 'spin', 'simTri', 'pause', 'simEnd',
];
const withMenu = ['shading', 'box', 'orient', 'section', 'datumShow'];

const ViewToolbar = () => (
  <div className="flex h-8 items-center border border-[#a3a5a7] bg-[#f6f8fa] pr-1 pl-0.5">
    {viewTools.map((name) => (
      <button
        key={name}
        title={name}
        className={`relative flex h-6 w-[26px] items-center justify-center ${name === 'spin' ? 'border border-[#b3b5b7] bg-[#dfe0e3]' : ''}`}
      >
        <Icon name={name} />
        {withMenu.includes(name) && (
          <svg viewBox="0 0 3 3" className="absolute right-0.5 bottom-0.5 size-[3px]"><path d="M3 0v3H0z" fill="#333" /></svg>
        )}
      </button>
    ))}
  </div>
);

const frontPlane = 'M971.600 472L1418.600 372.700 1440.600 745.300 993.700 844z';
const rightPlane = 'M1124.700 372.700L1284.700 468 1306.700 840 1146.700 745z';
const topPlane = 'M903.900 631L1351.200 531 1510.800 626.500 1064.300 726.700z';

// Model view: datum planes, the two extruded surfaces and the origin triad
const ModelView = () => (
  <svg viewBox="283 162 1637 884" className="h-full w-full" fill="none" role="img" aria-label="Model view">
    <defs>
      <clipPath id="clipFront"><path d={frontPlane} /></clipPath>
      <clipPath id="clipTop"><path d={topPlane} /></clipPath>
      <linearGradient id="bend" gradientUnits="userSpaceOnUse" x1="1370" y1="430" x2="1384" y2="495">
        <stop offset="0" stopColor="#949fe5" />
        <stop offset=".35" stopColor="#9ca7f3" />
        <stop offset=".6" stopColor="#949fe6" />
        <stop offset="1" stopColor="#7983bc" />
      </linearGradient>
      <linearGradient id="inner" gradientUnits="userSpaceOnUse" x1="1150" y1="390" x2="1158" y2="418">
        <stop offset="0" stopColor="#5f6592" />
        <stop offset="1" stopColor="#7a81b4" />
      </linearGradient>
      <linearGradient id="barrel" gradientUnits="userSpaceOnUse" x1="979" y1="760" x2="1109" y2="753">
        <stop offset="0" stopColor="#8792cf" />
        <stop offset=".15" stopColor="#929ee3" />
        <stop offset=".4" stopColor="#9ca7f3" />
        <stop offset=".65" stopColor="#939fe6" />
        <stop offset="1" stopColor="#7882ba" />
      </linearGradient>
      <linearGradient id="barrelIn" gradientUnits="userSpaceOnUse" x1="980" y1="665" x2="1027" y2="662">
        <stop offset="0" stopColor="#676c97" />
        <stop offset=".35" stopColor="#62678f" />
        <stop offset="1" stopColor="#7c83b8" />
      </linearGradient>
    </defs>

    <path d={frontPlane} fill="#e0e0e2" />
    <g clipPath="url(#clipFront)">
      <path d={rightPlane} fill="#d9d8dd" />
      <path d={topPlane} fill="#d9d8dd" />
      <g clipPath="url(#clipTop)"><path d={rightPlane} fill="#d5d2d7" /></g>
    </g>

    {/* bent sheet */}
    <path d="M1129.600 422.600C1129 400 1134 388 1141.800 388.200Q1146 388 1150 391L1262.700 457C1267 460 1269 464 1270.800 468.400L1133.300 498.700z" fill="#7a81b3" />
    <path d="M1129.600 422.600C1129 400 1134 388 1141.800 388.200Q1146 388 1150 391L1183 410.600z" fill="url(#inner)" />
    <path d="M1141.800 388.200L1353.700 341.300 1359.400 343.400 1471.800 410.200 1262.700 457 1150 390z" fill="#939fe5" />
    <path d="M1262.700 457L1471.800 410.200C1484 416 1495.500 437 1496.800 470L1286.500 516.300C1285 487 1275 464 1262.700 457z" fill="url(#bend)" />
    <path d="M1286.500 516.300L1496.800 470 1501.600 545.500 1290.900 592z" fill="#7983bb" />
    <g stroke="#14161f">
      <path d="M1150 390.500L1262.700 457C1275 464 1285 487 1286.500 516.300L1290.900 592 1501.600 545.500 1496.800 470C1495.500 437 1484 416 1471.800 410.200L1359.400 343.400Q1356 341 1352 342" />
      <path d="M1150 389.500L1359.400 343.400M1262.700 457L1471.800 410.200M1286.500 516.300L1496.800 470M1129.600 422.600L1183 410.600" />
      <path d="M1150 390.500Q1146 388 1141.800 388.200C1134 388 1129 400 1129.600 422.600L1133.300 498.700 1270.800 468.400" />
    </g>

    {/* half cylinder */}
    <path d="M1024.700 637.300C1003 642 978 655 977.700 667C978 680 1002 687 1027.300 688.500z" fill="url(#barrelIn)" />
    <path d="M977.700 667C979 684 1025 697 1103 684.500L1112.700 846.700C1060 858 992 850 987.300 830z" fill="url(#barrel)" />
    <path d="M1027.300 688.500L1024.700 637.300C1003 642 978 655 977.700 667C979 684 1025 697 1103 684.500L1112.700 846.700C1060 858 992 850 987.300 830" stroke="#14161f" />
    <path d="M977.700 667L987.300 830" stroke="#6570a8" strokeWidth=".6" />

    <g stroke="#7d4a54" strokeWidth=".9">
      <path d={frontPlane} />
      <path d={rightPlane} />
      <path d={topPlane} />
    </g>

    <path d="M1206.700 608.500L1229.200 603.400" stroke="#ff3a3a" />
    <path d="M1206.700 608.500L1207.600 633" stroke="#7fe6ee" />
    <path d="M1206.700 608.500L1217.800 615.500" stroke="#3cf03c" />
    <circle cx="1229.200" cy="603.400" r="2" fill="#ff2a2a" />
    <circle cx="1207.600" cy="633.400" r="2" fill="#1feaf5" />
    <circle cx="1217.800" cy="615.500" r="2.500" fill="#2bee2b" />
  </svg>
);

const StatusBar = () => (
  <footer className="flex h-[34px] items-center border-t border-[#a9b9ba] bg-[#f8faf9] text-[11px] text-[#454d50]">
    <button title="Show navigator" className="ml-1.5 flex h-6 w-[22px] items-center justify-center border border-[#aeb2b3] bg-[#dcdfe0]"><Icon name="panelEye" /></button>
    <button title="Show browser" className="ml-[7px]"><Icon name="globe" /></button>
    <button title="Full screen" className="ml-2.5"><Icon name="blank" /></button>
    <span className="mr-[3px] ml-3 h-6 w-px bg-[#b9bfc1]" />
    <Icon name="arrowRight" className="size-3" />
    <p className="ml-px">Click icons on Style toolbar to create curves and surfaces.</p>
    <div className="ml-auto flex items-center pr-[19px]">
      <span className="h-[26px] w-1.5 border-x border-[#aeb4b6]" />
      <button title="Find" className="ml-1.5 flex items-center gap-1.5"><Icon name="binoculars" /> <Caret /></button>
      <span className="mx-1.5 h-[26px] w-px bg-[#aeb4b6]" />
      <button title="Selection box" className="flex items-center gap-2"><Icon name="marquee" /> <Caret /></button>
      <button title="Selection filter" className="ml-2.5"><Icon name="selectEye" /></button>
      <div className="ml-[93px] flex h-[23px] w-[165px] items-center border border-[#a5abad] bg-[#f6f7f8]">
        <select aria-label="Filter" className="h-full min-w-0 flex-1 appearance-none px-[7px] outline-none">
          <option>Style</option>
        </select>
        <span className="flex h-full w-[15px] items-center justify-center border-l border-[#a5abad]"><Caret /></span>
      </div>
    </div>
  </footer>
);

export default function App() {
  return (
    <div className="flex h-screen flex-col overflow-hidden bg-[#f8faf9] font-['Open_Sans','Noto_Sans',sans-serif] text-[#3a4346]">
      <TitleBar />
      <TabBar />
      <Ribbon />
      <div className="flex min-h-0 flex-1">
        <Sidebar />
        <main className="relative min-w-0 flex-1 bg-[#e8eaee]">
          <ModelView />
          <div className="absolute inset-x-0 top-[7px] flex justify-center">
            <ViewToolbar />
          </div>
        </main>
      </div>
      <StatusBar />
    </div>
  );
}
